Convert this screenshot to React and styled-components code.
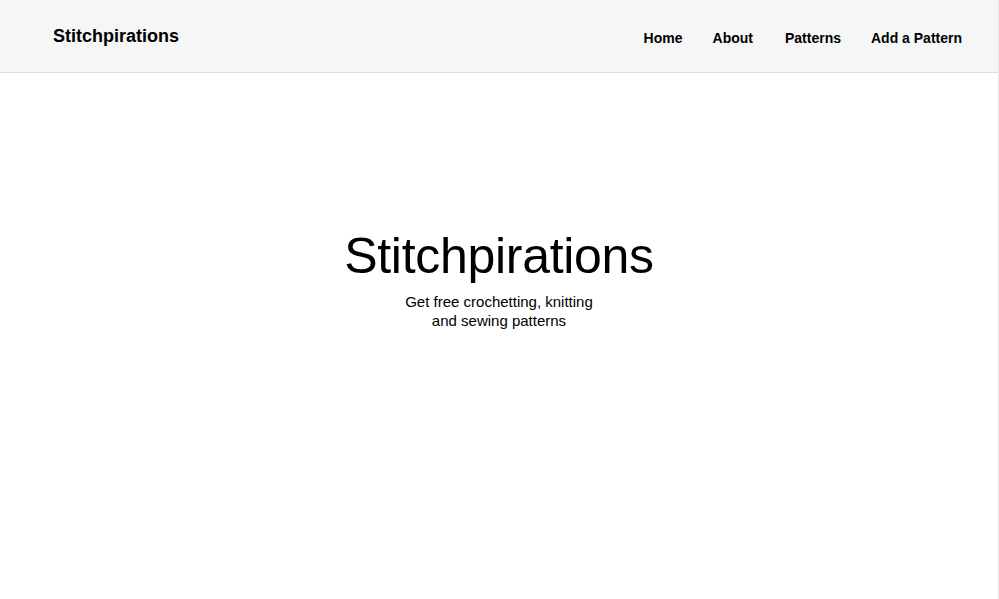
import React from "react";
import styled, { createGlobalStyle } from "styled-components";

const GlobalStyle = createGlobalStyle`
  html, body {
    margin: 0;
    padding: 0;
    background: #ffffff;
    font-family: "Liberation Sans", Arial, Helvetica, sans-serif;
    color: #000;
  }
`;

const Page = styled.div`
  width: 998px;
  height: 599px;
  border-right: 1px solid #e6e6e6;
  display: flex;
  flex-direction: column;
  overflow: hidden;
`;

const NavBar = styled.nav`
  height: 72px;
  background: #f6f6f6;
  border-bottom: 1px solid #dcdcdc;
  display: flex;
  align-items: center;
  justify-content: space-between;
  padding: 0 21px 0 53px;
  flex-shrink: 0;
`;

const Brand = styled.a`
  font-size: 18px;
  font-weight: bold;
  color: #000;
  text-decoration: none;
  margin-top: 1px;
`;

const NavList = styled.ul`
  list-style: none;
  display: flex;
  margin: 0;
  padding: 0;
  padding-top: 4px;
`;

const NavItem = styled.li`
  padding: 0 15px;
  &:nth-child(3) {
    padding-left: 17px;
  }
`;

const NavLink = styled.a`
  font-size: 14px;
  font-weight: bold;
  color: #000;
  text-decoration: none;
`;

const Hero = styled.section`
  display: flex;
  flex-direction: column;
  align-items: center;
  padding-top: 154px;
`;

const HeroTitle = styled.h1`
  margin: 0;
  font-size: 50px;
  font-weight: normal;
  line-height: 58px;
  letter-spacing: -0.3px;
`;

const HeroText = styled.p`
  margin: 7px 0 0;
  width: 200px;
  text-align: center;
  font-size: 15px;
  line-height: 19px;
`;

const links = ["Home", "About", "Patterns", "Add a Pattern"];

const App = () => {
  return (
    <Page>
      <GlobalStyle />
      <NavBar>
        <Brand href="#">Stitchpirations</Brand>
        <NavList>
          {links.map((link) => (
            <NavItem key={link}>
              <NavLink href="#">{link}</NavLink>
            </NavItem>
          ))}
        </NavList>
      </NavBar>
      <Hero>
        <HeroTitle>Stitchpirations</HeroTitle>
        <HeroText>Get free crochetting, knitting and sewing patterns</HeroText>
      </Hero>
    </Page>
  );
};

export default App;
